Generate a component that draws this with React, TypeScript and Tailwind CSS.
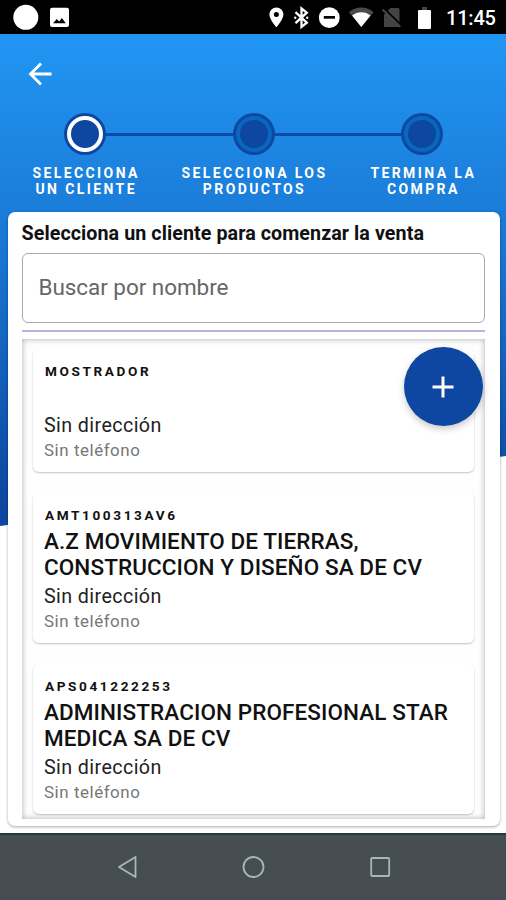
import React from "react";

type Client = { code: string; name: string[] };

const clients: Client[] = [
  { code: "MOSTRADOR", name: [] },
  { code: "AMT100313AV6", name: ["A.Z MOVIMIENTO DE TIERRAS,", "CONSTRUCCION Y DISEÑO SA DE CV"] },
  { code: "APS041222253", name: ["ADMINISTRACION PROFESIONAL STAR", "MEDICA SA DE CV"] },
];

function StatusBar() {
  return (
    <div className="flex h-[34px] shrink-0 items-center bg-black">
      <svg width="80" height="34" viewBox="0 0 80 34" fill="#fff">
        <circle cx="25.8" cy="17.3" r="12.5" />
        <path
          fillRule="evenodd"
          d="M52 7.7h15a2 2 0 0 1 2 2v15.2a2 2 0 0 1-2 2H52a2 2 0 0 1-2-2V9.7a2 2 0 0 1 2-2ZM53 23.2h12.800l-4-5.200-2.600 3.500-2.400-2.400Z"
        />
      </svg>
      <div className="grow" />
      <svg width="176" height="34" viewBox="264 0 176 34">
        <path
          fill="#fff"
          fillRule="evenodd"
          d="M276.400 7.500a7 7 0 0 0-7 7c0 5 7 12.800 7 12.800s7-7.800 7-12.800a7 7 0 0 0-7-7Zm0 4.500a2.500 2.500 0 1 1 0 5 2.500 2.500 0 0 1 0-5Z"
        />
        <path d="M295.500 12.200l11.300 10.500-5.300 4.100V8.500l5.300 4.200-11.300 10.500" fill="none" stroke="#fff" strokeWidth="2.300" />
        <circle cx="295.200" cy="17.700" r="1.200" fill="#fff" />
        <circle cx="307.200" cy="17.700" r="1.200" fill="#fff" />
        <circle cx="329.300" cy="17.700" r="10.400" fill="#fff" />
        <rect x="323.800" y="16" width="11.200" height="2.700" fill="#000" />
        <path d="M349 12.200a18.500 18.500 0 0 1 24.500 0L361.300 27Z" fill="#4a4a4a" />
        <path d="M352.100 15.600a14 14 0 0 1 18.400 0L361.300 27Z" fill="#fff" />
        <path d="M390.500 8h7.500a1.500 1.500 0 0 1 1.500 1.500V27H384V14.500Z" fill="#444" />
        <path d="M383 7.500l18.500 18" stroke="#000" strokeWidth="2" />
        <path d="M382.500 9.500l17.800 17.300" stroke="#444" strokeWidth="2" />
        <path d="M422 7h5v3h-5Z" fill="#444" />
        <path d="M419 10h11a1 1 0 0 1 1 1v17a1 1 0 0 1-1 1h-11a1 1 0 0 1-1-1V11a1 1 0 0 1 1-1Z" fill="#fff" />
      </svg>
      <span className="w-[66px] pt-[2px] pl-[6px] text-[20px] leading-[34px] font-medium tracking-[-0.200px] text-white">11:45</span>
    </div>
  );
}

function StepDot({ active }: { active?: boolean }) {
  return (
    <div className="flex size-[42px] shrink-0 items-center justify-center rounded-full bg-[#0d47a1]">
      <div className={`size-[36px] rounded-full border-4 bg-[#0d47a1] ${active ? "border-white" : "border-[#0868bd]"}`} />
    </div>
  );
}

function Stepper() {
  return (
    <div>
      <div className="flex items-center pr-[63px] pl-[64px]">
        <StepDot active />
        <div className="h-[3px] grow bg-[#0c4ba9]" />
        <StepDot />
        <div className="h-[3px] grow bg-[#0c4ba9]" />
        <StepDot />
      </div>
      <div className="mt-[10px] flex justify-center pl-[2px] text-center text-[14px] leading-[16px] font-bold tracking-[2.400px] text-white">
        <p className="w-[169px]">SELECCIONA<br />UN CLIENTE</p>
        <p className="w-[169px] whitespace-nowrap">SELECCIONA LOS<br />PRODUCTOS</p>
        <p className="w-[168px] pl-[2px]">TERMINA LA<br />COMPRA</p>
      </div>
    </div>
  );
}

function ClientCard({ code, name }: Client) {
  return (
    <div className="mb-[21px] rounded-[6px] bg-white pt-[13px] pr-[11px] pb-[11px] pl-[11.500px] shadow-[0_1px_2px_rgba(0,0,0,0.24)]">
      <p className="pl-px text-[13.600px] leading-[18px] font-bold tracking-[2.600px] text-[#111]">{code}</p>
      <div className="mt-[3.500px] mb-[4.500px] min-h-[26.500px] text-[22.500px] leading-[26.500px] font-medium tracking-[0.090px] whitespace-nowrap text-[#111]">
        {name.map((line) => (
          <p key={line}>{line}</p>
        ))}
      </div>
      <p className="text-[19.700px] leading-[24px] tracking-[0.400px] text-[#222]">Sin dirección</p>
      <p className="mt-px text-[16.900px] leading-[22px] tracking-[0.560px] text-[#777]">Sin teléfono</p>
    </div>
  );
}

export default function App() {
  return (
    <div className="relative flex h-[900px] w-[506px] flex-col overflow-hidden bg-white font-[Roboto,sans-serif]">
      <div className="absolute inset-x-0 top-[34px] h-[493px] bg-linear-to-b from-[#2196f3] via-[#1976d2] via-45% to-[#0d47a1] to-95% [clip-path:polygon(0_0,100%_0,100%_422px,0_492px)]" />
      <div className="relative flex grow flex-col">
        <StatusBar />
        <div className="flex h-[79px] items-center pl-[28px]">
          <svg width="24" height="24" viewBox="0 0 24 24" fill="none" stroke="#fff" strokeWidth="2.800">
            <path d="M23.500 12H3M13 1.500 2.500 12 13 22.500" />
          </svg>
        </div>
        <Stepper />
        <main className="relative mr-[6.500px] ml-[7.500px] mt-[14.500px] flex h-[614px] flex-col rounded-[7px] bg-white pt-[9.500px] pr-[14.500px] pl-[14px] shadow-[0_1px_3px_rgba(0,0,0,0.35)]">
          <h1 className="text-[19.700px] leading-[25px] font-bold tracking-[0.070px] whitespace-nowrap text-[#111]">
            Selecciona un cliente para comenzar la venta
          </h1>
          <div className="mt-[7px] flex h-[70px] shrink-0 items-center rounded-[6px] border-[1.500px] border-[#aaa] px-[16px] text-[22.500px] tracking-[-0.060px] text-[#666]">
            Buscar por nombre
          </div>
          <div className="mt-[6.500px] h-[2px] shrink-0 bg-[#b5b5e2]" />
          <div className="mt-[7px] h-[480px] shrink-0 overflow-hidden bg-[#fefefe] px-[11px] pt-[10px] shadow-[inset_0_0_6px_rgba(0,0,0,0.32)]">
            {clients.map((client) => (
              <ClientCard key={client.code} {...client} />
            ))}
          </div>
          <button className="absolute top-[135.500px] right-[17px] flex size-[79px] items-center justify-center rounded-full bg-[#0d47a1] shadow-[0_3px_7px_rgba(0,0,0,0.22)]">
            <svg width="22" height="22" viewBox="0 0 22 22" stroke="#fff" strokeWidth="3">
              <path d="M11 .500v21M.500 11h21" />
            </svg>
          </button>
        </main>
      </div>
      <nav className="relative h-[67px] shrink-0 border-t-2 border-[#203b36] bg-[#454d53]">
        <svg width="506" height="65" viewBox="0 835 506 65" fill="none" stroke="#abb4b6" strokeWidth="1.800" strokeLinejoin="round">
          <path d="M135.500 857v20l-16.500-10Z" />
          <circle cx="253.500" cy="867" r="10" />
          <rect x="371.200" y="858" width="18" height="18" rx="1" />
        </svg>
      </nav>
    </div>
  );
}
